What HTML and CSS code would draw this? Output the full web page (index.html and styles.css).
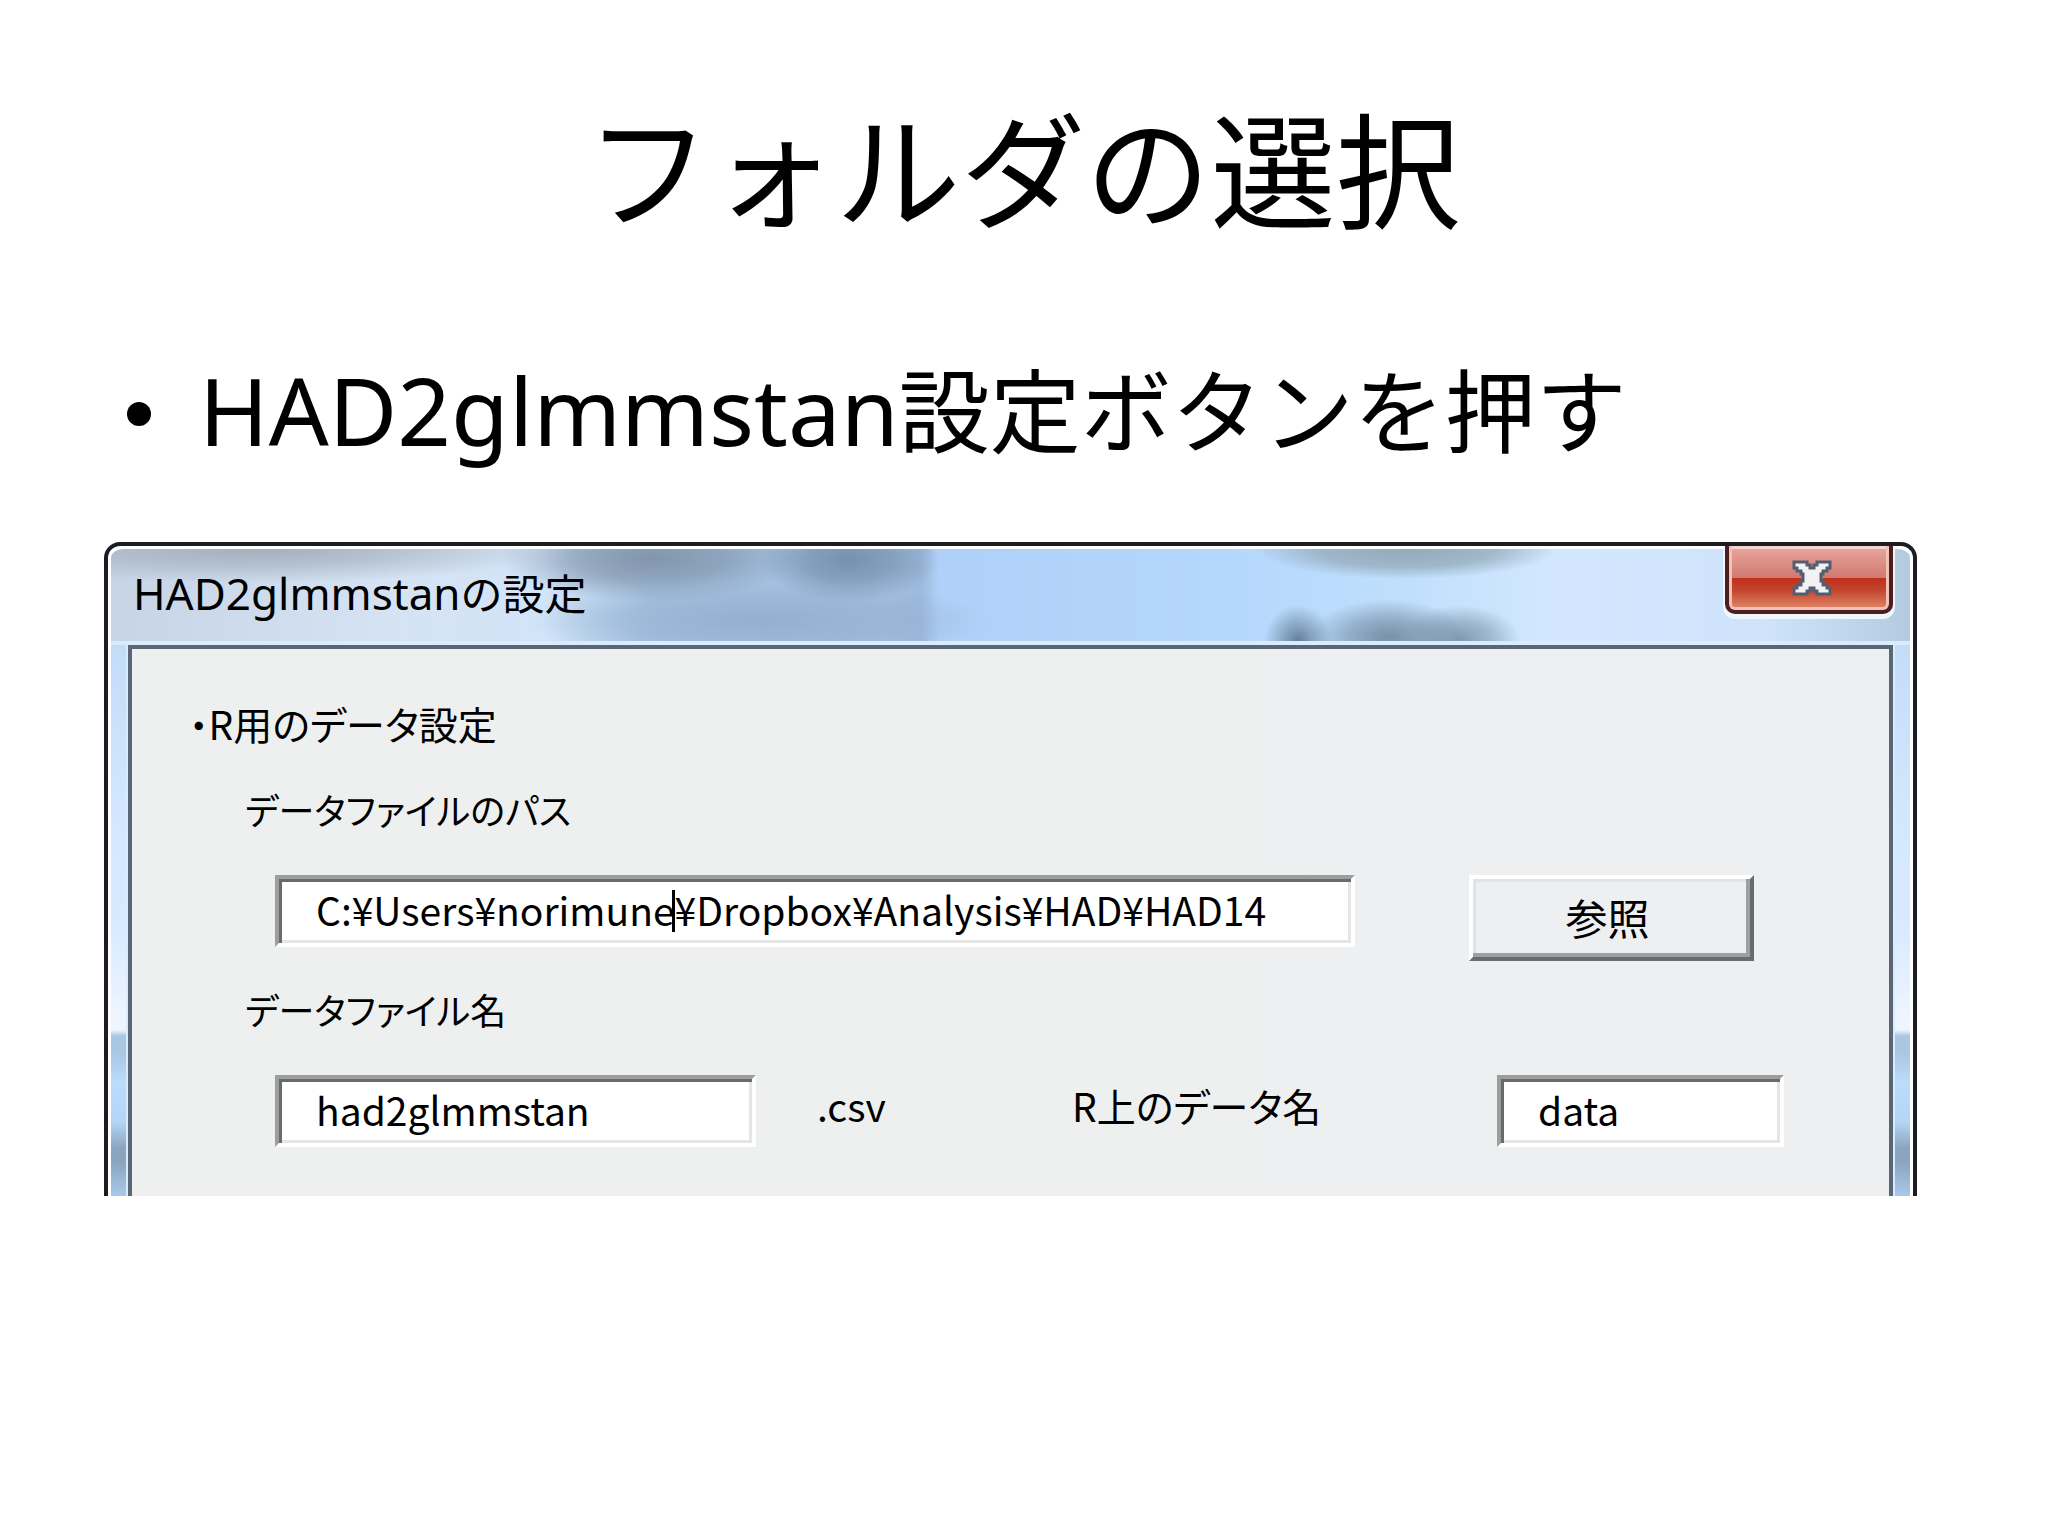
FILE: index.html
```html
<!DOCTYPE html>
<html lang="ja">
<head>
<meta charset="utf-8">
<title>フォルダの選択</title>
<link rel="stylesheet" href="styles.css">
</head>
<body>
<main class="slide">
  <h1 class="slide-title">フォルダの選択</h1>
  <ul class="points">
    <li class="point"><span class="latin">HAD2glmmstan</span>設定ボタンを押す</li>
  </ul>
  <section class="dialog" aria-labelledby="dialog-title">
    <header class="titlebar">
      <h2 class="dialog-title" id="dialog-title"><span class="dialog-latin">HAD2glmmstan</span>の設定</h2>
      <button class="close" type="button" aria-label="閉じる">
        <svg class="close-icon" viewBox="0 0 40 36" aria-hidden="true">
          <path d="M2 2H15V5H18V8H22V5H25V2H38V8H35V11H31V14H29V21H31V25H35V28H38V34H25V31H22V28H18V31H15V34H2V28H5V25H9V21H11V14H9V11H5V8H2Z" fill="#f2f2f4" stroke="#555e70" stroke-width="3"/>
        </svg>
      </button>
    </header>
    <form class="client">
      <h3 class="group">・R用のデータ設定</h3>
      <label class="label" for="path">データファイルのパス</label>
      <div class="path-row">
        <div class="path-field">
          <input class="field" id="path" type="text" value="C:¥Users¥norimune¥Dropbox¥Analysis¥HAD¥HAD14">
          <span class="caret"></span>
        </div>
        <button class="browse" type="button">参照</button>
      </div>
      <label class="label" for="file">データファイル名</label>
      <div class="name-row">
        <input class="field" id="file" type="text" value="had2glmmstan">
        <span class="suffix">.csv</span>
        <label class="data-label" for="data">R上のデータ名</label>
        <input class="field" id="data" type="text" value="data">
      </div>
    </form>
  </section>
</main>
</body>
</html>
```
FILE: styles.css
```css
* {
  box-sizing: border-box;
}

body {
  margin: 0;
  background: #fff;
  color: #000;
  font-family: "Noto Sans CJK JP", sans-serif;
}

.slide {
  padding: 78px 131px 0 104px;
}

.slide-title {
  margin: 0 0 0 25px;
  font-size: 125px;
  font-weight: 400;
  line-height: 174px;
  text-align: center;
}

.points {
  margin: 86px 0 0;
  padding: 0;
  list-style: none;
}

.point {
  display: flex;
  align-items: baseline;
  padding-left: 23px;
  font-size: 91px;
  line-height: 136px;
  white-space: nowrap;
}

.point::before {
  content: "";
  flex: none;
  align-self: center;
  width: 24px;
  height: 24px;
  margin: 12px 48px 0 0;
  border-radius: 50%;
  background: #000;
}

.latin {
  font-family: "Noto Sans", sans-serif;
  font-size: 94px;
}

/* Aero glass window */
.dialog {
  margin-top: 64px;
  padding: 0 15px;
  border: 4px solid #1a1d24;
  border-bottom: 0;
  border-radius: 16px 16px 0 0;
  background: linear-gradient(#c3dcf8 100px, #d2e7ff 260px, #d8eaff 380px, #f0f6ff 480px, #eef5fd 484px, #a9c6e2 490px, #a9c6e2 506px, #bbdcfb 536px, #b4d5f5 576px, #8ba5bf 602px, #8ba5bf 616px, #a9c8ea 650px);
  box-shadow: inset 3px 3px #fff, inset -3px 0 #fff;
}

.titlebar {
  display: flex;
  justify-content: space-between;
  align-items: flex-start;
  height: 99px;
  margin: 0 -12px;
  padding-left: 22px;
  border-top: 3px solid #fff;
  border-bottom: 4px solid #d9ebfd;
  border-radius: 12px 12px 0 0;
  background:
    radial-gradient(ellipse 300px 34px at 8% 0, #a4afbb, #a4afbb99 50%, #a4afbb00),
    radial-gradient(ellipse 150px 44px at 30% 10%, #8295ac, #8295acaa 50%, #8295ac00),
    radial-gradient(ellipse 90px 42px at 41% 12%, #7591ad, #7591adaa 50%, #7591ad00),
    radial-gradient(ellipse 150px 30px at 72% 0, #94a9b9, #94a9b9bb 60%, #94a9b900),
    radial-gradient(ellipse 34px 36px at 66% 100%, #637e98, #637e9800),
    radial-gradient(ellipse 80px 38px at 71% 96%, #7890a8, #7890a899 50%, #7890a800),
    radial-gradient(ellipse 60px 34px at 75% 98%, #829bb0, #829bb099 50%, #829bb000),
    radial-gradient(ellipse 230px 40px at 36% 78%, #8da9c9bb, #8da9c966 60%, #8da9c900),
    linear-gradient(90deg, #c6d4e6, #d5e3f4 16%, #d2e4f8 24%, #a9c6e5 30%, #a4c1e2 43%, #9db9dc 45%, #afd0f8 46%, #b4d7fd 62%, #c0dffc 72%, #d2e7ff 80%, #cfe4fb 92%, #b4cbdf);
}

.dialog-title {
  display: flex;
  align-items: baseline;
  margin: 13px 0 0;
  font-size: 42px;
  font-weight: 400;
  line-height: 60px;
  white-space: nowrap;
}

.dialog-latin {
  font-family: "Noto Sans", sans-serif;
  font-size: 44px;
}

.close {
  display: flex;
  justify-content: center;
  align-items: center;
  width: 168px;
  height: 68px;
  margin: -3px 17px 0 0;
  padding: 0 0 0 6px;
  border: 4px solid #4e1d1e;
  border-top: 0;
  border-radius: 0 0 10px 10px;
  background: linear-gradient(#eaa79f, #cf7a70 32px, #c0301c 32px, #c4442c 44px, #e28c6c);
  box-shadow: inset 3px 0 #f1c3b8, inset -3px 0 #f1c3b8, inset 0 -3px #f1c3b8, inset 0 3px #f6d4ce, 0 3px 0 2px #eef6fe;
}

.close-icon {
  width: 40px;
  height: 36px;
}

.client {
  display: flex;
  flex-direction: column;
  height: 551px;
  margin: 0 5px;
  padding: 44px 105px 0 53px;
  border: 4px solid #586675;
  border-bottom: 0;
  background: linear-gradient(90deg, #eef0ef 55%, #eeeff1 75%);
  box-shadow: 0 0 0 2px #d9ebfd;
  font-size: 39px;
  font-feature-settings: "palt";
}

.group {
  margin: 0 0 26px;
  padding-left: 4px;
  font-size: 39px;
  font-weight: 400;
  line-height: 60px;
}

.label {
  margin-left: 60px;
  font-size: 36px;
  line-height: 60px;
}

.path-row,
.name-row {
  display: grid;
  margin: 36px 0 0 90px;
}

.path-row {
  grid-template-columns: 1080fr 285fr;
  column-gap: 114px;
  align-items: start;
  margin-right: 30px;
  margin-bottom: 18px;
}

.name-row {
  grid-template-columns: 481fr 257fr 484fr 287fr;
}

.path-field {
  position: relative;
}

.field {
  width: 100%;
  min-width: 0;
  height: 72px;
  padding: 0 0 4px 37px;
  border: 4px solid;
  border-color: #9c9e9d #fff #fff #9c9e9d;
  border-radius: 0;
  background: #fff;
  box-shadow: inset 3px 3px #696b6a, inset -3px -3px #e4e5e5;
  color: #000;
  font: 39px "Noto Sans CJK JP", sans-serif;
}

.caret {
  position: absolute;
  top: 15px;
  left: 397px;
  width: 3px;
  height: 42px;
  background: #000;
}

.browse {
  height: 86px;
  padding: 0 8px 4px 0;
  border: 4px solid;
  border-color: #fff #696b6e #696b6e #fff;
  border-radius: 0;
  background: #eeeff1;
  box-shadow: inset -4px -4px #9d9fa1, inset 3px 3px #e2e3e5;
  color: #000;
  font: 42px "Noto Sans CJK JP", sans-serif;
}

.suffix,
.data-label {
  line-height: 60px;
}

.suffix {
  padding-left: 61px;
}

.data-label {
  padding-left: 59px;
}
```
